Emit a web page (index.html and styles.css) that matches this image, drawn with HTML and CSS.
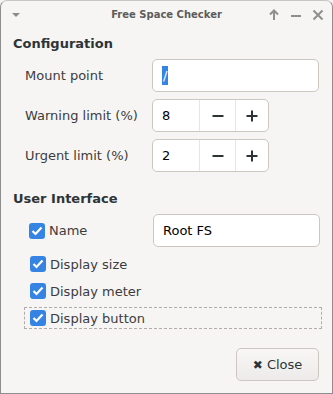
FILE: index.html
```html
<!DOCTYPE html>
<html lang="en">
<head>
  <meta charset="UTF-8" />
  <title>Free Space Checker</title>
  <link rel="stylesheet" href="styles.css">
</head>
<body>

<div class="window">
  <!-- Title bar -->
  <div class="titlebar">
    <svg class="menu-arrow" width="10" height="6" viewBox="0 0 10 6"><path d="M1 1h8l-4 4z" fill="#8b8b8b"/></svg>
    <div class="title">Free Space Checker</div>
    <div class="controls">
      <svg width="12" height="12" viewBox="0 0 12 12"><path d="M6 11V2M2 5.5L6 1.5l4 4" stroke="#8f8f8f" stroke-width="2" fill="none"/></svg>
      <svg width="12" height="12" viewBox="0 0 12 12"><path d="M1 7h10" stroke="#8f8f8f" stroke-width="2"/></svg>
      <svg width="12" height="12" viewBox="0 0 12 12"><path d="M1.5 1.5l9 9M10.5 1.5l-9 9" stroke="#8f8f8f" stroke-width="2"/></svg>
    </div>
  </div>

  <div class="content">
    <div class="section-title">Configuration</div>

    <div class="form-row">
      <label>Mount point</label>
      <div class="entry"><span class="selected">/</span></div>
    </div>
    <div class="form-row">
      <label>Warning limit (%)</label>
      <div class="spin">
        <span class="spin-value">8</span>
        <span class="spin-btn"><svg width="12" height="12" viewBox="0 0 12 12"><path d="M0.5 6h11" stroke="#2e3436" stroke-width="2"/></svg></span>
        <span class="spin-btn plus"><svg width="12" height="12" viewBox="0 0 12 12"><path d="M0.5 6h11M6 0.5v11" stroke="#2e3436" stroke-width="2"/></svg></span>
      </div>
    </div>
    <div class="form-row">
      <label>Urgent limit (%)</label>
      <div class="spin">
        <span class="spin-value">2</span>
        <span class="spin-btn"><svg width="12" height="12" viewBox="0 0 12 12"><path d="M0.5 6h11" stroke="#2e3436" stroke-width="2"/></svg></span>
        <span class="spin-btn plus"><svg width="12" height="12" viewBox="0 0 12 12"><path d="M0.5 6h11M6 0.5v11" stroke="#2e3436" stroke-width="2"/></svg></span>
      </div>
    </div>

    <div class="section-title second">User Interface</div>

    <div class="form-row check-row-name">
      <div class="check"><span class="box"><svg width="12" height="10" viewBox="0 0 12 10"><path d="M1.5 5l3 3 6-6.5" stroke="#fff" stroke-width="2.2" fill="none"/></svg></span>Name</div>
      <div class="entry">Root FS</div>
    </div>
    <div class="check"><span class="box"><svg width="12" height="10" viewBox="0 0 12 10"><path d="M1.5 5l3 3 6-6.5" stroke="#fff" stroke-width="2.2" fill="none"/></svg></span>Display size</div>
    <div class="check"><span class="box"><svg width="12" height="10" viewBox="0 0 12 10"><path d="M1.5 5l3 3 6-6.5" stroke="#fff" stroke-width="2.2" fill="none"/></svg></span>Display meter</div>
    <div class="check focused"><span class="box"><svg width="12" height="10" viewBox="0 0 12 10"><path d="M1.5 5l3 3 6-6.5" stroke="#fff" stroke-width="2.2" fill="none"/></svg></span>Display button</div>

    <div class="actions">
      <button class="close-btn"><span class="x">&#10006;</span> Close</button>
    </div>
  </div>
</div>

</body>
</html>
```

FILE: styles.css
```css
* {
  margin: 0;
  padding: 0;
  box-sizing: border-box;
  font-family: 'DejaVu Sans', sans-serif;
}

body {
  background: #f6f5f4;
}

.window {
  width: 333px;
  height: 394px;
  background: #f6f5f4;
  border: 1px solid #8e8e8e;
  border-top-color: #c9c7c4;
  border-radius: 7px 7px 0 0;
  display: flex;
  flex-direction: column;
  color: #2e3436;
}

.titlebar {
  height: 27px;
  display: flex;
  align-items: center;
  padding: 0 8px 0 10px;
  position: relative;
}

.menu-arrow {
  margin-top: 1px;
}

.title {
  position: absolute;
  left: 0;
  right: 0;
  text-align: center;
  font-size: 10px;
  font-weight: bold;
  color: #5e5c5a;
  pointer-events: none;
}

.controls {
  margin-left: auto;
  display: flex;
  gap: 10px;
}

.content {
  flex: 1;
  display: flex;
  flex-direction: column;
  padding: 8px 12px 12px 12px;
}

.section-title {
  font-size: 13px;
  font-weight: bold;
  line-height: 16px;
  margin-bottom: 7px;
  color: #2e3436;
}

.section-title.second {
  margin-top: 12px;
}

.form-row {
  display: flex;
  align-items: center;
  height: 33px;
  margin-bottom: 7px;
  font-size: 13px;
  color: #3c3c3c;
}

.form-row label {
  width: 139px;
  padding-left: 12px;
}

.entry {
  width: 167px;
  height: 33px;
  background: #fff;
  border: 1px solid #cdc7c2;
  border-radius: 5px;
  padding: 0 9px;
  display: flex;
  align-items: center;
  color: #000;
  font-size: 13px;
}

.selected {
  background: #3584e4;
  color: #fff;
  padding: 0 1px;
  line-height: 19px;
}

.spin {
  width: 117px;
  height: 33px;
  display: flex;
  background: #fff;
  border: 1px solid #cdc7c2;
  border-radius: 5px;
  color: #000;
}

.spin-value {
  width: 46px;
  display: flex;
  align-items: center;
  padding-left: 9px;
  font-size: 13px;
}

.spin-btn {
  width: 36px;
  display: flex;
  align-items: center;
  justify-content: center;
  border-left: 1px solid #e8e6e3;
}

.spin-btn.plus {
  width: 33px;
}

.check-row-name {
  margin-bottom: 6px;
}

.check-row-name .check {
  width: 129px;
  margin-bottom: 0;
  border: 0;
}

.check {
  display: flex;
  align-items: center;
  height: 22px;
  margin-left: 11px;
  margin-bottom: 5px;
  padding-left: 5px;
  font-size: 13px;
  color: #3c3c3c;
  border: 1px dashed transparent;
}

.check.focused {
  width: 298px;
  border-color: #b0aca8;
}

.box {
  width: 16px;
  height: 16px;
  margin-right: 4px;
  background: #3584e4;
  border-radius: 3px;
  display: flex;
  align-items: center;
  justify-content: center;
}

.actions {
  margin-top: auto;
  display: flex;
  justify-content: flex-end;
  padding-right: 1px;
}

.close-btn {
  width: 83px;
  height: 33px;
  border: 1px solid #cdc7c2;
  border-radius: 5px;
  background: linear-gradient(#f8f7f6, #edebe9);
  font-size: 13px;
  color: #2e3436;
}

.close-btn .x {
  font-size: 12px;
  color: #2e3436;
}
```
